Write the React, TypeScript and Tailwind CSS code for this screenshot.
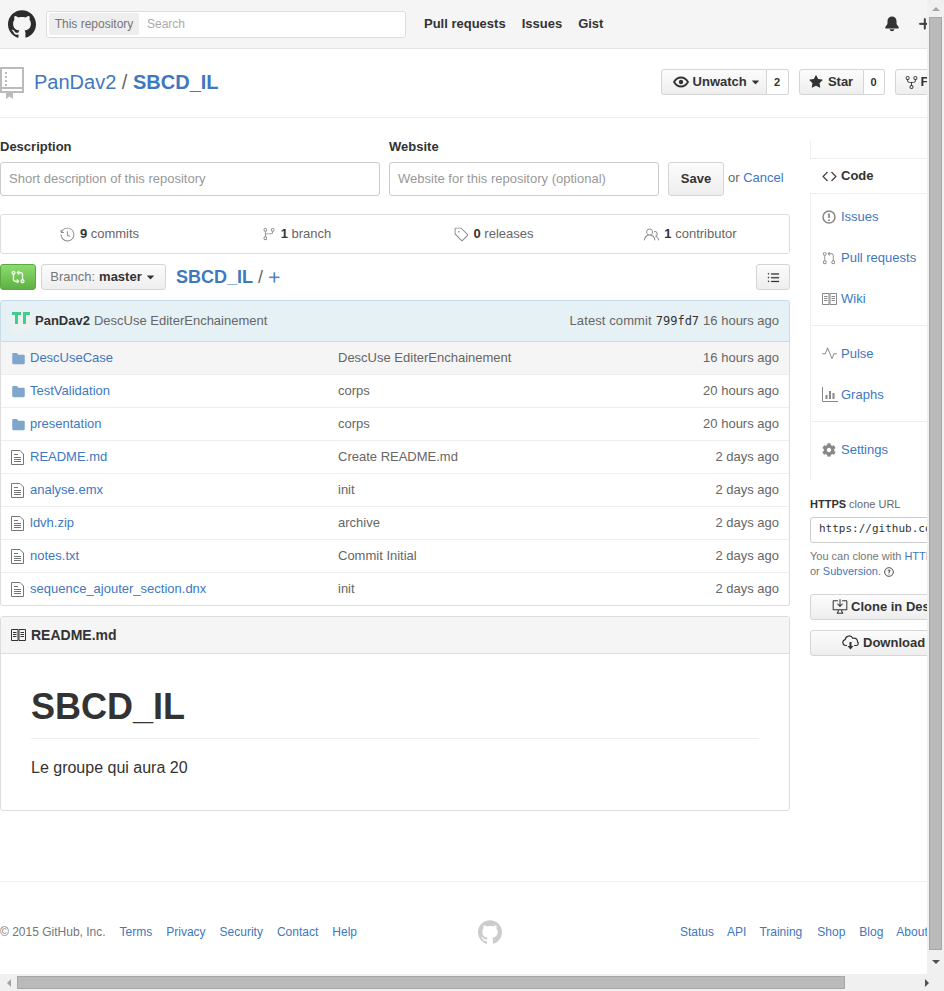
import React from 'react';
import {
  GoBellFill, GoPlus, GoStarFill, GoRepoForked, GoHistory, GoGitBranch, GoTag,
  GoPeople, GoGitCompare, GoListUnordered, GoFileDirectoryFill, GoCode,
  GoGitPullRequest, GoPulse, GoQuestion, GoDesktopDownload, GoTriangleDown,
} from 'react-icons/go';
import { SiGithub } from 'react-icons/si';
import { FaCog } from 'react-icons/fa';

const FileIcon = () => (
  <svg width="13" height="15" viewBox="0 0 13 15" fill="none" stroke="#767676" className="shrink-0">
    <path d="M.5.5h8.5l3.5 3.5v10.5h-12z" />
    <path d="M3 4.500h4M3 7.500h7M3 9.500h7M3 11.500h7" />
  </svg>
);

const BookIcon = ({ color, size = 15 }: { color: string; size?: number }) => (
  <svg width={size} height={(size * 12) / 15} viewBox="0 0 15 12" fill="none" stroke={color} className="shrink-0">
    <path d="M.5.5h6.500v11h-6.500zM8 .5h6.500v11h-6.500z" />
    <path d="M2 3.500h3.500M2 5.500h3.500M2 7.500h3.500M9.500 3.500h3.500M9.500 5.500h3.500M9.500 7.500h3.500" />
  </svg>
);

const RepoIcon = () => (
  <svg width="24" height="32" viewBox="0 0 24 32" fill="none" className="shrink-0">
    <path d="M1 1h22v24h-22z" stroke="#bbb" strokeWidth="2" />
    <path d="M1 21h22" stroke="#bbb" strokeWidth="2" />
    <path d="M6 5v2M6 9v2M6 13v2M6 17v2" stroke="#bbb" strokeWidth="2" />
    <path d="M6 24h7v8l-3.500-2.500-3.500 2.500z" fill="#bbb" />
  </svg>
);

const GraphIcon = () => (
  <svg width="16" height="15" viewBox="0 0 16 15" fill="none" stroke="#888" className="shrink-0">
    <path d="M.5 0v14.500h15.500" />
    <path d="M4.500 12v-4M8 12v-8M11.500 12v-6" strokeWidth="2" />
  </svg>
);

const CloudIcon = () => (
  <svg width="17" height="15" viewBox="0 0 17 15" fill="none" stroke="#333" strokeWidth="1.200" className="shrink-0">
    <path d="M5 10.500h-1.500a3 3 0 0 1-.3-5.900 4 4 0 0 1 7.600-1.300 3.500 3.500 0 0 1 4.700 3.700 2 2 0 0 1-1 3.500h-2.500" />
    <path d="M8.500 7v5" strokeWidth="2" />
    <path d="M5.500 11h6l-3 3.500z" fill="#333" stroke="none" />
  </svg>
);

const EyeIcon = () => (
  <svg width="16" height="12" viewBox="0 0 16 12" fill="none" stroke="#333" strokeWidth="1.800" className="shrink-0">
    <path d="M1 6c1.800-3 4-4.500 7-4.500s5.200 1.500 7 4.500c-1.800 3-4 4.500-7 4.500s-5.200-1.500-7-4.500z" />
    <circle cx="8" cy="6" r="2.200" fill="#333" stroke="none" />
  </svg>
);

const IssueIcon = () => (
  <svg width="14" height="14" viewBox="0 0 14 14" fill="none" stroke="#888" strokeWidth="1.500" className="shrink-0">
    <circle cx="7" cy="7" r="6" />
    <path d="M7 3.500v4.500M7 9.500v1.500" strokeWidth="1.800" />
  </svg>
);

const files = [
  { name: 'DescUseCase', msg: 'DescUse EditerEnchainement', age: '16 hours ago', dir: true },
  { name: 'TestValidation', msg: 'corps', age: '20 hours ago', dir: true },
  { name: 'presentation', msg: 'corps', age: '20 hours ago', dir: true },
  { name: 'README.md', msg: 'Create README.md', age: '2 days ago', dir: false },
  { name: 'analyse.emx', msg: 'init', age: '2 days ago', dir: false },
  { name: 'ldvh.zip', msg: 'archive', age: '2 days ago', dir: false },
  { name: 'notes.txt', msg: 'Commit Initial', age: '2 days ago', dir: false },
  { name: 'sequence_ajouter_section.dnx', msg: 'init', age: '2 days ago', dir: false },
];

const btn = 'border border-[#d5d5d5] bg-gradient-to-b from-[#fcfcfc] to-[#eeeeee] font-bold text-[#333]';

const Stat = ({ icon, n, label }: { icon: React.ReactNode; n: string; label: string }) => (
  <div className="flex-1 flex items-center justify-center gap-[5px] text-[#666]">
    {icon}
    <span><b className="text-[#333]">{n}</b> {label}</span>
  </div>
);

const SideItem = ({ icon, label }: { icon: React.ReactNode; label: string }) => (
  <div className="h-[41px] flex items-center text-[#4078c0]">
    <span className="w-[30px] pl-[11px] flex items-center">{icon}</span>
    {label}
  </div>
);

export default function App() {
  return (
    <div className="relative w-[944px] h-[991px] overflow-hidden bg-white text-[13px] text-[#333] font-['Liberation_Sans',Arial,sans-serif]">
      {/* top bar */}
      <header className="h-[49px] bg-[#f5f5f5] border-b border-[#e5e5e5] flex items-center whitespace-nowrap">
        <SiGithub size={28} className="ml-[8px] text-[#2c2c2c] shrink-0" />
        <div className="ml-[10px] w-[360px] h-[27px] bg-white border border-[#ddd] rounded-[3px] flex items-center px-[2px]">
          <span className="h-[22px] w-[90px] bg-[#eee] rounded-[2px] text-[12px] text-[#767676] flex items-center justify-center">This repository</span>
          <span className="ml-[8px] text-[12px] text-[#aaa]">Search</span>
        </div>
        <nav className="ml-[18px] flex gap-[16px] font-bold text-[#333]">
          <span>Pull requests</span>
          <span>Issues</span>
          <span>Gist</span>
        </nav>
        <GoBellFill size={18} className="ml-[280px] text-[#333] shrink-0" />
        <GoPlus size={18} className="ml-[15px] text-[#333] shrink-0" stroke="currentColor" strokeWidth={1} />
      </header>

      {/* repo title */}
      <div className="h-[69px] border-b border-[#eee] flex items-center whitespace-nowrap">
        <RepoIcon />
        <div className="ml-[10px] -mt-[2px] text-[20px] text-[#4078c0]">
          PanDav2 <span className="text-[#666]">/</span> <b>SBCD_IL</b>
        </div>
        <div className="ml-[442px] -mt-[2px] flex items-center">
          <div className={`${btn} h-[26px] w-[106px] rounded-l-[3px] flex items-center pl-[11px] gap-[4px]`}>
            <EyeIcon /> Unwatch <GoTriangleDown size={13} className="-ml-[2px]" />
          </div>
          <div className="h-[26px] w-[22px] border border-l-0 border-[#d5d5d5] rounded-r-[3px] text-[11px] font-bold flex items-center justify-center">2</div>
          <div className={`${btn} ml-[10px] h-[26px] w-[65px] rounded-l-[3px] flex items-center justify-center gap-[5px]`}>
            <GoStarFill size={14} /> Star
          </div>
          <div className="h-[26px] w-[21px] border border-l-0 border-[#d5d5d5] rounded-r-[3px] text-[11px] font-bold flex items-center justify-center">0</div>
          <div className={`${btn} ml-[10px] h-[26px] w-[65px] rounded-l-[3px] flex items-center pl-[8px] gap-[2px]`}>
            <GoRepoForked size={15} /> Fork
          </div>
        </div>
      </div>

      <div className="flex">
        {/* main column */}
        <main className="w-[790px] shrink-0 pt-[20px]">
          <div className="flex items-end whitespace-nowrap">
            <div className="w-[380px]">
              <div className="h-[18px] mb-[6px] flex items-end font-bold">Description</div>
              <div className="h-[34px] border border-[#ccc] rounded-[3px] flex items-center pl-[8px] text-[#999]">Short description of this repository</div>
            </div>
            <div className="ml-[9px] w-[270px]">
              <div className="h-[18px] mb-[6px] flex items-end font-bold">Website</div>
              <div className="h-[34px] border border-[#ccc] rounded-[3px] flex items-center pl-[8px] text-[#999]">Website for this repository (optional)</div>
            </div>
            <div className={`${btn} ml-[9px] w-[56px] h-[34px] rounded-[3px] flex items-center justify-center`}>Save</div>
            <div className="ml-[4px] h-[36px] flex items-center text-[#666]">or&nbsp;<span className="text-[#4078c0]">Cancel</span></div>
          </div>

          <div className="mt-[18px] h-[40px] border border-[#ddd] rounded-[3px] flex">
            <Stat icon={<GoHistory size={15} className="text-[#888]" />} n="9" label="commits" />
            <Stat icon={<GoGitBranch size={14} className="text-[#888]" />} n="1" label="branch" />
            <Stat icon={<GoTag size={15} className="text-[#888]" />} n="0" label="releases" />
            <Stat icon={<GoPeople size={15} className="text-[#888]" />} n="1" label="contributor" />
          </div>

          <div className="mt-[10px] h-[26px] flex items-center whitespace-nowrap">
            <div className="w-[36px] h-[26px] rounded-[3px] border border-[#5ca941] bg-gradient-to-b from-[#8add6d] to-[#60b044] flex items-center justify-center text-white">
              <GoGitCompare size={14} stroke="currentColor" strokeWidth={0.6} />
            </div>
            <div className={`${btn} ml-[5px] w-[125px] h-[26px] rounded-[3px] flex items-center justify-center gap-[4px] !font-normal`}>
              <span className="text-[#767676]">Branch:</span> <b>master</b> <GoTriangleDown size={13} className="-ml-[2px]" />
            </div>
            <b className="ml-[10px] text-[18px] text-[#4078c0]">SBCD_IL</b>
            <span className="ml-[5px] text-[18px] text-[#666]">/</span>
            <GoPlus size={17} className="ml-[3px] text-[#4078c0]" stroke="currentColor" strokeWidth={0.6} />
            <div className={`${btn} ml-auto w-[34px] h-[26px] rounded-[3px] flex items-center justify-center`}>
              <GoListUnordered size={15} stroke="currentColor" strokeWidth={0.5} />
            </div>
          </div>

          <div className="mt-[10px] h-[42px] bg-[#e6f1f6] border border-[#c5dcea] rounded-t-[3px] flex items-center whitespace-nowrap px-[10px]">
            <span className="w-[20px] h-[20px] rounded-[2px] bg-[#eef1f2] shrink-0">
              <svg width="20" height="20" viewBox="0 0 20 20" fill="#3ecf8e">
                <path d="M1 1h9v3h-3v9h-3v-9h-3zM12 1h7v3h-4v9h-3z" />
              </svg>
            </span>
            <b className="ml-[4px]">PanDav2</b>
            <span className="ml-[4px] text-[#666]">DescUse EditerEnchainement</span>
            <span className="ml-auto text-[#666] tracking-[0.1px]">Latest commit</span>
            <span className="ml-[4px] text-[12px] text-[#333] font-['DejaVu_Sans_Mono',monospace]">799fd7</span>
            <span className="ml-[4px] text-[#666]">16 hours ago</span>
          </div>

          <div className="border-x border-b border-[#ddd] rounded-b-[3px]">
            {files.map((f, i) => (
              <div key={f.name} className={`flex items-center whitespace-nowrap ${i > 0 ? 'h-[33px] border-t border-[#eee]' : 'h-[32px] bg-[#f5f5f5]'}`}>
                <span className="w-[29px] pl-[10px] flex items-center">
                  {f.dir ? <GoFileDirectoryFill size={15} className="text-[#80a6cd]" /> : <FileIcon />}
                </span>
                <span className="w-[308px] text-[#4078c0]">{f.name}</span>
                <span className="text-[#666]">{f.msg}</span>
                <span className="ml-auto pr-[10px] text-[#666]">{f.age}</span>
              </div>
            ))}
          </div>

          <div className="mt-[10px] h-[195px] border border-[#ddd] rounded-[3px]">
            <div className="h-[37px] bg-[#f5f5f5] border-b border-[#ddd] flex items-center pl-[10px] gap-[5px] text-[14px] font-bold">
              <BookIcon color="#333" /> README.md
            </div>
            <div className="px-[30px]">
              <div className="mt-[30px] h-[55px] border-b border-[#eee] text-[36px] font-bold leading-[46px]">SBCD_IL</div>
              <p className="mt-[17px] text-[16px] leading-[24px]">Le groupe qui aura 20</p>
            </div>
          </div>
        </main>

        {/* sidebar, runs under the scrollbar */}
        <aside className="ml-[20px] w-[200px] shrink-0 pt-[22px] whitespace-nowrap">
          <div className="border-l border-[#f0f0f0] h-[341px]">
            <div className="h-[18px]" />
            <div className="h-[36px] -ml-[1px] bg-white border-y border-[#eee] flex items-center font-bold text-[#333]">
              <span className="w-[31px] pl-[12px] flex items-center"><GoCode size={15} stroke="currentColor" strokeWidth={0.6} /></span>Code
            </div>
            <div className="border-b border-[#eee] pt-[2px] pb-[6px]">
              <SideItem icon={<IssueIcon />} label="Issues" />
              <SideItem icon={<GoGitPullRequest size={14} className="text-[#888]" />} label="Pull requests" />
              <SideItem icon={<BookIcon color="#888" />} label="Wiki" />
            </div>
            <div className="border-b border-[#eee] pt-[7px] pb-[6px]">
              <SideItem icon={<GoPulse size={15} className="text-[#888]" />} label="Pulse" />
              <SideItem icon={<GraphIcon />} label="Graphs" />
            </div>
            <div className="pt-[7px]">
              <SideItem icon={<FaCog size={14} className="text-[#888]" />} label="Settings" />
            </div>
          </div>

          <div className="mt-[15px] text-[11px] text-[#666]"><b className="text-[#333]">HTTPS</b> clone URL</div>
          <div className="mt-[4px] h-[26px] border border-[#ccc] rounded-[3px] flex items-center pl-[8px] text-[11px] text-[#333] font-['DejaVu_Sans_Mono',monospace]">https://github.com/PanDav2/SBCD_IL.git</div>
          <div className="mt-[6px] text-[11px] leading-[15px] text-[#767676]">
            You can clone with <span className="text-[#4078c0]">HTTPS</span>
            <br />
            or <span className="text-[#4078c0]">Subversion</span>. <GoQuestion size={10} className="inline text-[#333]" stroke="currentColor" strokeWidth={0.5} />
          </div>
          <div className={`${btn} mt-[15px] w-[170px] h-[26px] rounded-[3px] flex items-center pl-[21px] gap-[3px]`}>
            <GoDesktopDownload size={16} /> Clone in Desktop
          </div>
          <div className={`${btn} mt-[10px] w-[170px] h-[26px] rounded-[3px] flex items-center pl-[31px] gap-[4px]`}>
            <CloudIcon /> Download ZIP
          </div>
        </aside>
      </div>

      {/* footer */}
      <footer className="mt-[70px] h-[100px] border-t border-[#eee] flex items-center text-[12px] whitespace-nowrap">
        <div className="w-[478px] flex gap-[14px] text-[#4078c0]">
          <span className="text-[#767676]">© 2015 GitHub, Inc.</span>
          <span>Terms</span>
          <span>Privacy</span>
          <span>Security</span>
          <span>Contact</span>
          <span>Help</span>
        </div>
        <SiGithub size={24} className="text-[#ccc] shrink-0" />
        <div className="ml-[178px] flex gap-[13px] text-[#4078c0]">
          <span>Status</span>
          <span>API</span>
          <span className="mr-[2px]">Training</span>
          <span className="mr-[1px]">Shop</span>
          <span>Blog</span>
          <span>About</span>
        </div>
      </footer>

      {/* browser scrollbars */}
      <div className="absolute top-0 right-0 bottom-[17px] w-[17px] bg-[#f0f0f0] flex flex-col items-center">
        <div className="h-[17px] flex items-center"><div className="border-x-[4px] border-x-transparent border-b-[4px] border-b-[#a3a3a3]" /></div>
        <div className="h-[933px] w-[13px] bg-[#bababa] border border-[#a6a6a6]" />
        <div className="flex-1 flex items-center"><div className="border-x-[4px] border-x-transparent border-t-[4px] border-t-[#505050]" /></div>
      </div>
      <div className="absolute left-0 right-0 bottom-0 h-[17px] bg-[#f0f0f0] flex items-center">
        <div className="w-[17px] flex justify-center"><div className="border-y-[4px] border-y-transparent border-r-[4px] border-r-[#a3a3a3]" /></div>
        <div className="w-[828px] h-[13px] bg-[#bababa] border border-[#a6a6a6]" />
        <div className="ml-auto w-[34px] flex justify-center"><div className="border-y-[4px] border-y-transparent border-l-[4px] border-l-[#505050]" /></div>
      </div>
    </div>
  );
}
